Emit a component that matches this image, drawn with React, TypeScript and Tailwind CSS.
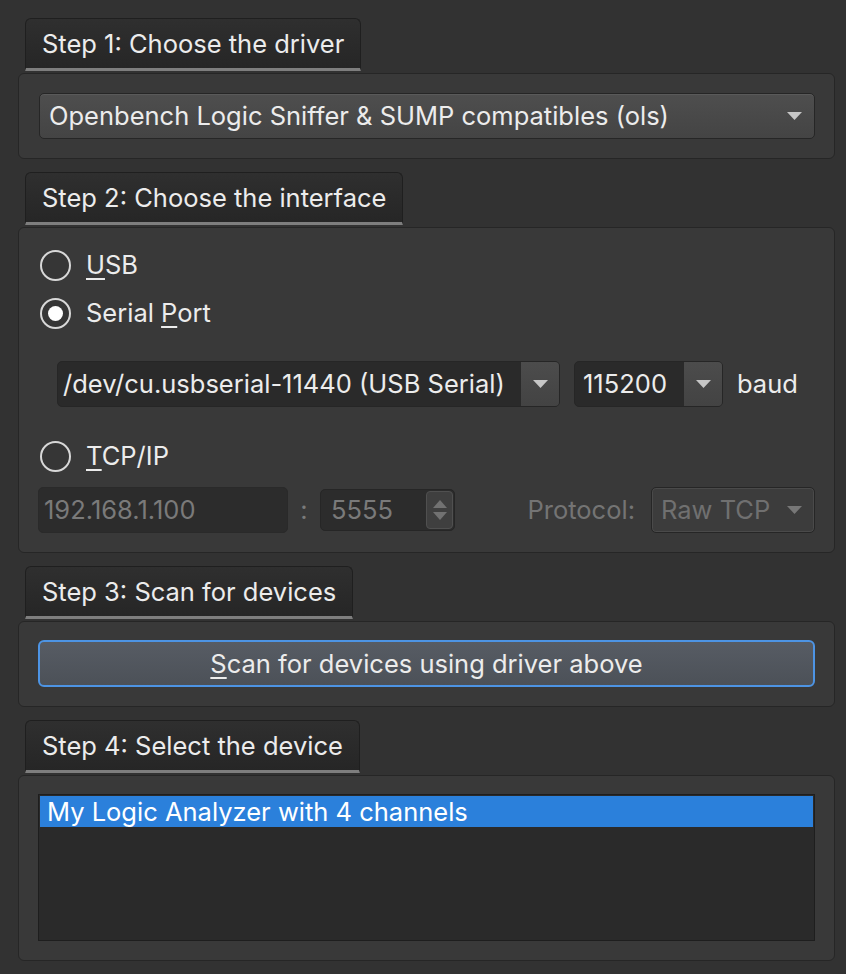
import React from "react";

function Tab({ children }: { children: React.ReactNode }) {
  return (
    <div className="ml-[7px] self-start h-[53px] flex items-center pl-[16px] pr-[16px] rounded-t-[6px] border-x border-t border-[#1f1f1f] border-b-[3px] border-b-[#7e7e7e] bg-gradient-to-b from-[#2f2f2f] to-[#262626] text-[#ececec] leading-none">
      {children}
    </div>
  );
}

function Arrow({ color = "#c6c6c6" }: { color?: string }) {
  return (
    <svg width="15" height="8" viewBox="0 0 15 8">
      <path d="M0 0 H15 L7.5 8 Z" fill={color} />
    </svg>
  );
}

function Radio({ checked }: { checked?: boolean }) {
  return (
    <div className="w-[31px] h-[31px] rounded-full border-[2.5px] border-[#d8d8d8] bg-[#363636] flex items-center justify-center">
      {checked && <div className="w-[15px] h-[15px] rounded-full bg-white" />}
    </div>
  );
}

function U({ children }: { children: React.ReactNode }) {
  return <span className="underline underline-offset-[4px] decoration-[2px]">{children}</span>;
}

export default function App() {
  return (
    <div className="min-h-[974px] w-[846px] bg-[#323232] pl-[18px] pr-[11px] pt-[18px] text-[25.5px] text-[#ececec] font-[family-name:Inter,'Liberation_Sans',sans-serif] leading-none">
      {/* Step 1 */}
      <div className="flex flex-col">
        <Tab>Step 1: Choose the driver</Tab>
        <div className="mt-[2px] rounded-[6px] border border-[#262626] bg-[#393939] px-[19px] pt-[19px] pb-[19px]">
          <div className="ml-px h-[46px] rounded-[5px] border border-[#262626] bg-gradient-to-b from-[#4e4e4e] to-[#444444] shadow-[inset_0_1px_0_#5a5a5a] flex items-center pl-[9px] pr-[12px]">
            <span className="flex-1">Openbench Logic Sniffer &amp; SUMP compatibles (ols)</span>
            <Arrow />
          </div>
        </div>
      </div>

      {/* Step 2 */}
      <div className="flex flex-col mt-[13px]">
        <Tab>Step 2: Choose the interface</Tab>
        <div className="mt-[2px] rounded-[6px] border border-[#262626] bg-[#393939] px-[19px] pt-[17px] pb-[19px]">
          <div className="h-[40px] flex items-center ml-[2px]">
            <Radio />
            <span className="ml-[15px]"><U>U</U>SB</span>
          </div>
          <div className="mt-[8px] h-[40px] flex items-center ml-[2px]">
            <Radio checked />
            <span className="ml-[15px]">Serial <U>P</U>ort</span>
          </div>
          <div className="mt-[28px] h-[46px] flex items-center ml-[19px]">
            <div className="w-[503px] h-[46px] rounded-[5px] border border-[#262626] bg-[#2a2a2a] flex items-stretch overflow-hidden">
              <span className="flex-1 flex items-center pl-[5px] whitespace-nowrap">/dev/cu.usbserial-11440 (USB Serial)</span>
              <div className="w-[39px] bg-gradient-to-b from-[#4c4c4c] to-[#434343] border-l border-[#2a2a2a] flex items-center justify-center">
                <Arrow />
              </div>
            </div>
            <div className="ml-[14px] w-[149px] h-[46px] rounded-[5px] border border-[#262626] bg-[#2a2a2a] flex items-stretch overflow-hidden">
              <span className="flex-1 flex items-center pl-[8px]">115200</span>
              <div className="w-[39px] bg-gradient-to-b from-[#4c4c4c] to-[#434343] border-l border-[#2a2a2a] flex items-center justify-center">
                <Arrow />
              </div>
            </div>
            <span className="ml-[14px]">baud</span>
          </div>
          <div className="mt-[29px] h-[40px] flex items-center ml-[2px]">
            <Radio />
            <span className="ml-[15px]"><U>T</U>CP/IP</span>
          </div>
          <div className="mt-[11px] h-[46px] flex items-center">
            <div className="w-[250px] h-[46px] rounded-[5px] border border-[#2a2a2a] bg-[#2c2c2c] flex items-center pl-[5px] text-[#7a7a7a]">
              192.168.1.100
            </div>
            <div className="w-[32px] text-center text-[#7a7a7a]">:</div>
            <div className="w-[135px] h-[42px] rounded-[5px] border border-[#262626] bg-[#2c2c2c] flex items-stretch overflow-hidden">
              <span className="flex-1 flex items-center pl-[10px] text-[#7a7a7a]">5555</span>
              <div className="w-[27px] my-[1px] mr-[1px] rounded-[4px] border border-[#505050] bg-[#3f3f3f] flex flex-col items-center justify-center gap-[4px]">
                <svg width="14" height="8" viewBox="0 0 14 8"><path d="M0 8 H14 L7 0 Z" fill="#727272" /></svg>
                <svg width="14" height="8" viewBox="0 0 14 8"><path d="M0 0 H14 L7 8 Z" fill="#727272" /></svg>
              </div>
            </div>
            <span className="ml-auto text-[#747474]">Protocol:</span>
            <div className="ml-[16px] w-[164px] h-[46px] rounded-[5px] border border-[#262626] bg-[#3c3c3c] shadow-[inset_0_0_0_1px_#4a4a4a] flex items-center pl-[9px] pr-[12px] text-[#707070]">
              <span className="flex-1 whitespace-nowrap">Raw TCP</span>
              <Arrow color="#777777" />
            </div>
          </div>
        </div>
      </div>

      {/* Step 3 */}
      <div className="flex flex-col mt-[13px]">
        <Tab>Step 3: Scan for devices</Tab>
        <div className="mt-[2px] rounded-[6px] border border-[#262626] bg-[#393939] px-[19px] pt-[18px] pb-[19px]">
          <div className="h-[47px] rounded-[6px] border-2 border-[#4d94e4] bg-gradient-to-b from-[#575c64] to-[#4c5158] flex items-center justify-center">
            <span><U>S</U>can for devices using driver above</span>
          </div>
        </div>
      </div>

      {/* Step 4 */}
      <div className="flex flex-col mt-[13px]">
        <Tab>Step 4: Select the device</Tab>
        <div className="mt-[2px] rounded-[6px] border border-[#262626] bg-[#393939] px-[19px] pt-[18px] pb-[19px]">
          <div className="h-[147px] border border-[#1e1e1e] bg-[#2a2a2a] p-px">
            <div className="h-[31px] bg-[#2b80db] flex items-center pl-[7px] text-white">
              My Logic Analyzer with 4 channels
            </div>
          </div>
        </div>
      </div>
    </div>
  );
}
